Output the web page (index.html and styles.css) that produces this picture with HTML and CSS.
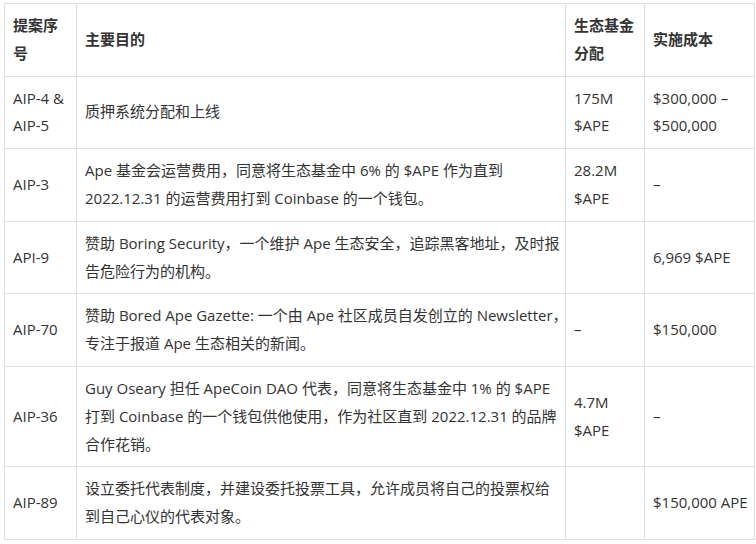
FILE: index.html
```html
<!DOCTYPE html>
<html lang="zh-CN">
<head>
<meta charset="utf-8">
<link rel="stylesheet" href="styles.css">
</head>
<body>
<table class="aip">
  <colgroup>
    <col class="c1"><col class="c2"><col class="c3"><col class="c4">
  </colgroup>
  <thead>
    <tr><th>提案序<br>号</th><th>主要目的</th><th>生态基金<br>分配</th><th>实施成本</th></tr>
  </thead>
  <tbody>
    <tr><td>AIP-4 &amp;<br>AIP-5</td><td>质押系统分配和上线</td><td>175M<br>$APE</td><td>$300,000 –<br>$500,000</td></tr>
    <tr><td>AIP-3</td><td>Ape 基金会运营费用，同意将生态基金中 6% 的 $APE 作为直到<br>2022.12.31 的运营费用打到 Coinbase 的一个钱包。</td><td>28.2M<br>$APE</td><td>–</td></tr>
    <tr><td>API-9</td><td>赞助 Boring Security，一个维护 Ape 生态安全，追踪黑客地址，及时报<br>告危险行为的机构。</td><td></td><td>6,969 $APE</td></tr>
    <tr><td>AIP-70</td><td>赞助 Bored Ape Gazette: 一个由 Ape 社区成员自发创立的 Newsletter，<br>专注于报道 Ape 生态相关的新闻。</td><td>–</td><td>$150,000</td></tr>
    <tr><td>AIP-36</td><td>Guy Oseary 担任 ApeCoin DAO 代表，同意将生态基金中 1% 的 $APE<br>打到 Coinbase 的一个钱包供他使用，作为社区直到 2022.12.31 的品牌<br>合作花销。</td><td>4.7M<br>$APE</td><td>–</td></tr>
    <tr><td>AIP-89</td><td>设立委托代表制度，并建设委托投票工具，允许成员将自己的投票权给<br>到自己心仪的代表对象。</td><td></td><td>$150,000 APE</td></tr>
  </tbody>
</table>
</body>
</html>
```
FILE: styles.css
```css
html, body {
  margin: 0;
  padding: 0;
  background: #ffffff;
}
body {
  padding: 3px 0 0 4px;
  font-family: "Open Sans", "Noto Sans CJK SC", sans-serif;
  font-size: 15px;
  color: #333333;
}
.aip {
  border-collapse: collapse;
  table-layout: fixed;
  width: 750px;
}
.c1 { width: 72px; }
.c2 { width: 489px; }
.c3 { width: 79px; }
.c4 { width: 110px; }
.aip th, .aip td {
  border: 1px solid #dfdfdf;
  padding: 8px 8px;
  line-height: 27.8px;
  text-align: left;
  vertical-align: middle;
  white-space: nowrap;
}
.aip th {
  font-weight: bold;
  color: #333333;
}
```
